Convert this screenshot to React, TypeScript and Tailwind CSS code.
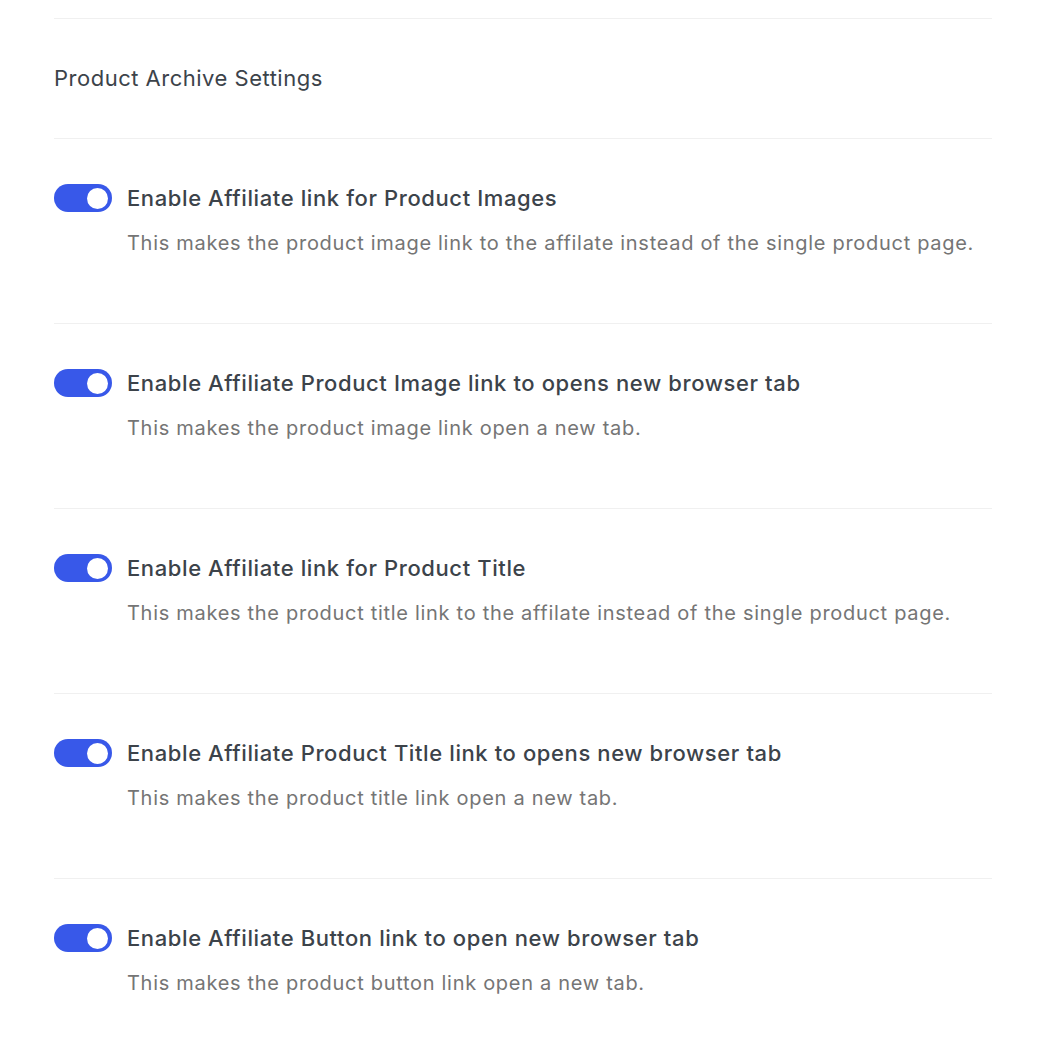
import React from 'react';

interface SettingRowProps {
  title: string;
  description: string;
  enabled?: boolean;
}

const Toggle: React.FC<{ on: boolean }> = ({ on }) => (
  <div
    className={`flex items-center w-[58px] h-[28px] rounded-full px-[4px] shrink-0 ${
      on ? 'bg-[#3858e9] justify-end' : 'bg-[#c3c4c7] justify-start'
    }`}
  >
    <div className="w-[21px] h-[21px] rounded-full bg-white" />
  </div>
);

const SettingRow: React.FC<SettingRowProps> = ({ title, description, enabled = true }) => {
  return (
    <div className="border-t border-[#f0f0f0] pt-[45px] h-[185px]">
      <div className="flex items-center gap-[15px]">
        <Toggle on={enabled} />
        <span className="text-[22px] font-medium text-[#3c434a] leading-[28px] tracking-[0.6px]">{title}</span>
      </div>
      <p className="pl-[73px] mt-[17px] text-[20px] text-[#757575] leading-[28px] tracking-[0.7px]">
        {description}
      </p>
    </div>
  );
};

const settings: SettingRowProps[] = [
  {
    title: 'Enable Affiliate link for Product Images',
    description: 'This makes the product image link to the affilate instead of the single product page.',
  },
  {
    title: 'Enable Affiliate Product Image link to opens new browser tab',
    description: 'This makes the product image link open a new tab.',
  },
  {
    title: 'Enable Affiliate link for Product Title',
    description: 'This makes the product title link to the affilate instead of the single product page.',
  },
  {
    title: 'Enable Affiliate Product Title link to opens new browser tab',
    description: 'This makes the product title link open a new tab.',
  },
  {
    title: 'Enable Affiliate Button link to open new browser tab',
    description: 'This makes the product button link open a new tab.',
  },
];

export default function App() {
  return (
    <div className="min-h-[1060px] bg-white pt-[18px]" style={{ fontFamily: 'Inter, "Noto Sans", sans-serif' }}>
      <div className="mx-[54px]">
        <div className="border-t border-[#f0f0f0] h-[120px] flex items-center">
          <h2 className="text-[22px] text-[#3c434a] font-normal tracking-[0.5px]">Product Archive Settings</h2>
        </div>
        {settings.map((s) => (
          <SettingRow key={s.title} {...s} />
        ))}
      </div>
    </div>
  );
}
